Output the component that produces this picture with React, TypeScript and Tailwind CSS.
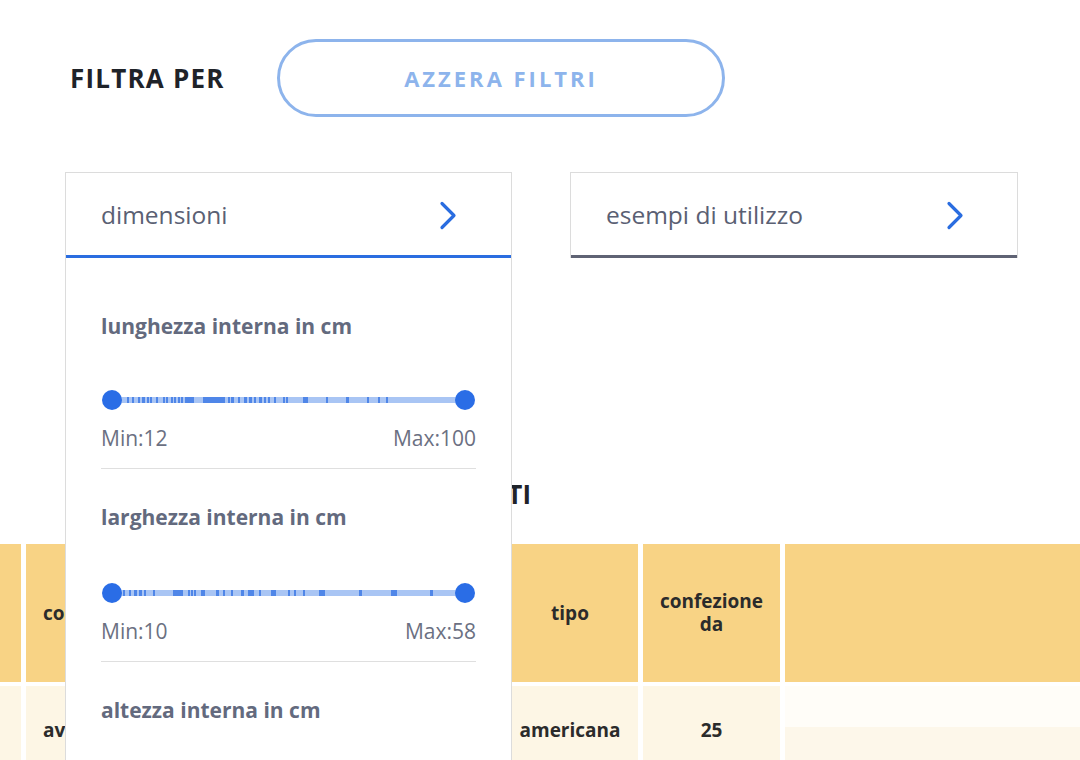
type Tick = [number, number];

const ticksA: Tick[] = [
  [26, 2], [31, 2], [37, 2], [41, 3], [46, 2], [49, 2], [55, 2], [62, 2], [65, 2], [70, 2], [73, 2], [77, 2],
  [80, 2], [84, 9], [102, 22], [127, 2], [130, 3], [137, 2], [143, 3], [148, 3], [153, 2], [158, 3], [163, 2],
  [167, 2], [173, 2], [182, 2], [185, 2], [202, 5], [225, 2], [245, 3], [266, 2], [277, 2], [285, 2],
];

const ticksB: Tick[] = [
  [22, 2], [28, 2], [33, 3], [38, 3], [43, 2], [52, 2], [72, 10], [87, 2], [90, 2], [93, 2], [100, 4], [115, 3],
  [122, 2], [130, 2], [140, 3], [147, 6], [158, 2], [170, 5], [187, 2], [193, 2], [202, 2], [218, 6], [258, 3],
  [290, 6], [329, 3],
];

function Chevron() {
  return (
    <svg width="18" height="29" viewBox="0 0 18 29" fill="none" className="block">
      <polyline points="3,2.5 15,14.5 3,26.5" stroke="#2a6de0" strokeWidth="3.2" strokeLinecap="round" strokeLinejoin="round" />
    </svg>
  );
}

function RangeSlider({ ticks, min, max }: { ticks: Tick[]; min: number; max: number }) {
  return (
    <div>
      <svg width="375" height="22" viewBox="0 0 375 22" className="block">
        <rect x="11" y="8" width="354" height="6" fill="#a9c5f4" />
        {ticks.map(([x, w], i) => (
          <rect key={i} x={x} y="8" width={w} height="6" fill="#4f86e8" />
        ))}
        <circle cx="11" cy="11" r="10" fill="#2a6de6" />
        <circle cx="364" cy="11" r="10" fill="#2a6de6" />
      </svg>
      <div className="mt-[13px] flex justify-between text-[21px] leading-[28px] text-[#6b7082]">
        <span>Min:{min}</span>
        <span>Max:{max}</span>
      </div>
    </div>
  );
}

function FilterGroup({
  label,
  children,
  last,
  sliderGap = 'mt-[49px]',
}: {
  label: string;
  children?: React.ReactNode;
  last?: boolean;
  sliderGap?: string;
}) {
  return (
    <div className={last ? '' : 'border-b border-[#dfdfdf] pb-[16px]'}>
      <div className="text-[21px] font-bold leading-[28px] text-[#636a7e]">{label}</div>
      {children && <div className={sliderGap}>{children}</div>}
    </div>
  );
}

export default function App() {
  return (
    <div className="relative h-[760px] w-[1080px] overflow-hidden bg-white" style={{ fontFamily: '"Open Sans", "Liberation Sans", sans-serif' }}>
      <div className="flex items-center pt-[39px] pl-[70px]">
        <h2 className="w-[154px] whitespace-nowrap text-[26px] font-bold leading-[34px] tracking-[1.2px] text-[#1f2329]">FILTRA PER</h2>
        <button className="ml-[53px] flex h-[78px] w-[448px] items-center justify-center rounded-full border-[3px] border-[#8db4ec] text-[22px] font-bold tracking-[3px] text-[#8db4ec]">
          AZZERA FILTRI
        </button>
      </div>

      <div className="mt-[55px] flex pl-[65px] gap-[58px]">
        <div className="relative z-10 w-[447px]">
          <div className="flex h-[86px] items-center justify-between border border-b-0 border-[#dcdcdc] pl-[35px] pr-[54px] shadow-[inset_0_-3px_0_#2a6de0]">
            <span className="text-[24.5px] text-[#5a6073]">dimensioni</span>
            <Chevron />
          </div>
          <div className="absolute left-0 top-full h-[520px] w-[447px] border-x border-[#dcdcdc] bg-white px-[35px] pt-[54px]">
            <div className="flex w-[375px] flex-col gap-[34px]">
              <FilterGroup label="lunghezza interna in cm">
                <RangeSlider ticks={ticksA} min={12} max={100} />
              </FilterGroup>
              <FilterGroup label="larghezza interna in cm" sliderGap="mt-[51px]">
                <RangeSlider ticks={ticksB} min={10} max={58} />
              </FilterGroup>
              <FilterGroup label="altezza interna in cm" last />
            </div>
          </div>
        </div>
        <div className="w-[448px]">
          <div className="flex h-[86px] items-center justify-between border border-b-0 border-[#dcdcdc] pl-[35px] pr-[53px] shadow-[inset_0_-3px_0_#5f6374]">
            <span className="text-[24.5px] text-[#5a6073]">esempi di utilizzo</span>
            <Chevron />
          </div>
        </div>
      </div>

      <div className="mt-[220px] w-[531px] text-right text-[26px] font-bold leading-[32px] text-[#1f2329]">RISULTATI</div>

      <div className="mt-[34px] grid grid-cols-[21px_164px_150px_147px_136px_137px_1fr] gap-x-[5px] gap-y-[4px] text-[19px] font-bold text-[#2b2b2b]">
        <div className="h-[138px] bg-[#f8d385]" />
        <div className="flex h-[138px] items-center bg-[#f8d385] pl-[17px]">codice</div>
        <div className="h-[138px] bg-[#f8d385]" />
        <div className="h-[138px] bg-[#f8d385]" />
        <div className="flex h-[138px] items-center justify-center bg-[#f8d385]">tipo</div>
        <div className="flex h-[138px] items-center justify-center bg-[#f8d385]">
          <p className="w-[110px] text-center leading-[23px]">confezione da</p>
        </div>
        <div className="h-[138px] bg-[#f8d385]" />

        <div className="h-[88px] bg-[#fdf6e5]" />
        <div className="flex h-[88px] items-center bg-[#fdf6e5] pl-[17px]">avana</div>
        <div className="h-[88px] bg-[#fdf6e5]" />
        <div className="h-[88px] bg-[#fdf6e5]" />
        <div className="flex h-[88px] items-center justify-center bg-[#fdf6e5]">americana</div>
        <div className="flex h-[88px] items-center justify-center bg-[#fdf6e5]">25</div>
        <div className="flex h-[88px] flex-col">
          <div className="h-[41px] bg-[#fffdf8]" />
          <div className="flex-1 bg-[#fdf7ea]" />
        </div>
      </div>
    </div>
  );
}
